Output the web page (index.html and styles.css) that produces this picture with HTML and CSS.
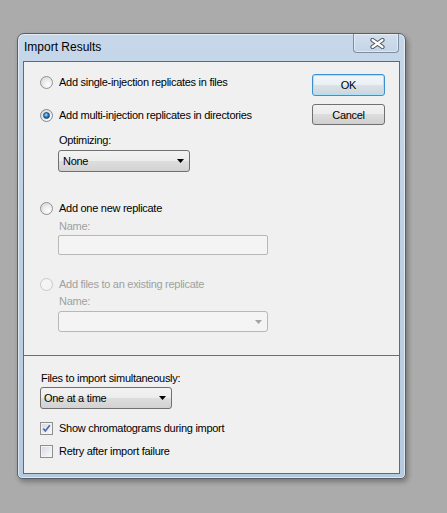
FILE: index.html
```html
<!DOCTYPE html>
<html>
<head>
<meta charset="utf-8">
<link rel="stylesheet" href="styles.css">
</head>
<body>
<div class="window">
  <div class="titlebar">
    <div class="title">Import Results</div>
    <div class="close">
      <svg width="15" height="11" viewBox="0 0 15 11">
        <path d="M2.5 2 L12.5 9 M12.5 2 L2.5 9" stroke="#4d5561" stroke-width="4.2" stroke-linecap="round" fill="none"/>
        <path d="M2.5 2 L12.5 9 M12.5 2 L2.5 9" stroke="#ffffff" stroke-width="2.2" stroke-linecap="round" fill="none"/>
      </svg>
    </div>
  </div>
  <div class="client">
    <div class="top">
      <div class="options">
        <div class="row r1"><span class="radio"></span><span>Add single-injection replicates in files</span></div>
        <div class="row r2"><span class="radio checked"></span><span>Add multi-injection replicates in directories</span></div>
        <div class="label l-opt">Optimizing:</div>
        <div class="combo c-none"><span>None</span><svg class="arrow" width="7" height="4" viewBox="0 0 7 4"><path d="M0 0 H7 L3.5 4 Z" fill="#000"/></svg></div>
        <div class="row r3"><span class="radio"></span><span>Add one new replicate</span></div>
        <div class="label disabled l-name1">Name:</div>
        <div class="textbox"></div>
        <div class="row r4 disabled"><span class="radio off"></span><span>Add files to an existing replicate</span></div>
        <div class="label disabled l-name2">Name:</div>
        <div class="combo off"><span></span><svg class="arrow" width="7" height="4" viewBox="0 0 7 4"><path d="M0 0 H7 L3.5 4 Z" fill="#a3a3a3"/></svg></div>
      </div>
      <div class="buttons">
        <div class="btn default">OK</div>
        <div class="btn cancel">Cancel</div>
      </div>
    </div>
    <div class="bottom">
      <div class="label l-files">Files to import simultaneously:</div>
      <div class="combo c-files"><span>One at a time</span><svg class="arrow" width="7" height="4" viewBox="0 0 7 4"><path d="M0 0 H7 L3.5 4 Z" fill="#000"/></svg></div>
      <div class="row k1"><span class="check">
        <svg width="11" height="11" viewBox="0 0 11 11"><path d="M2.3 5.6 L4.4 8 L8.8 2.3" stroke="#5468a6" stroke-width="1.7" fill="none"/></svg>
      </span><span>Show chromatograms during import</span></div>
      <div class="row k2"><span class="check"></span><span>Retry after import failure</span></div>
    </div>
  </div>
</div>
</body>
</html>
```
FILE: styles.css
```css
html, body {
  margin: 0;
  padding: 0;
}
body {
  background: #ababab;
  width: 447px;
  height: 513px;
  overflow: hidden;
  font-family: "Liberation Sans", Arial, sans-serif;
  font-size: 11px;
  color: #000;
}
.window {
  margin: 33px 0 0 17px;
  width: 389px;
  box-sizing: border-box;
  border: 1px solid #5a5f66;
  border-radius: 7px 7px 5px 5px;
  background: linear-gradient(to bottom, #c6d7ea 0, #bfd1e4 40%, #b6cadf 100%);
  padding: 0 5px 4px;
  box-shadow: 2px 3px 5px rgba(0, 0, 0, 0.3), inset 0 0 0 1px rgba(255, 255, 255, 0.55);
}
.titlebar {
  display: flex;
  justify-content: space-between;
  height: 27px;
}
.title {
  font-family: "Liberation Sans", Arial, sans-serif;
  font-size: 12px;
  line-height: 27px;
  padding-left: 1px;
  color: #000;
}
.close {
  width: 46px;
  height: 19px;
  margin-right: 1px;
  box-sizing: border-box;
  border: 1px solid #7d8da0;
  border-top: none;
  border-radius: 0 0 4px 4px;
  display: flex;
  align-items: center;
  justify-content: center;
  background: linear-gradient(#d2dfec, #c4d5e7);
  box-shadow: inset 0 0 0 1px rgba(255, 255, 255, 0.45);
}
.close svg {
  margin-left: 2px;
}
.client {
  border: 1px solid #5d6a79;
  background: #f0f0f0;
  height: 413px;
  box-sizing: border-box;
  display: flex;
  flex-direction: column;
  letter-spacing: -0.28px;
}
.top {
  height: 293px;
  flex: none;
  display: flex;
  justify-content: space-between;
  border-bottom: 1px solid #6e6e6e;
}
.options {
  padding-left: 16px;
  display: flex;
  flex-direction: column;
  align-items: flex-start;
}
.row {
  display: flex;
  align-items: center;
  gap: 6px;
  height: 14px;
  white-space: nowrap;
}
.label {
  height: 13px;
  line-height: 13px;
  margin-left: 19px;
  white-space: nowrap;
}
.disabled {
  color: #a0a0a0;
}
.r1 { margin-top: 13px; }
.r2 { margin-top: 19px; }
.l-opt { margin-top: 12px; }
.c-none { margin-top: 3px; margin-left: 18px; }
.r3 { margin-top: 29px; }
.l-name1 { margin-top: 5px; }
.textbox {
  margin-top: 2px;
  margin-left: 18px;
  width: 210px;
  height: 20px;
  box-sizing: border-box;
  border: 1px solid #b8b8b8;
  border-radius: 2px;
  background: #f4f4f4;
}
.r4 { margin-top: 22px; }
.l-name2 { margin-top: 4px; }
.combo.off { margin-top: 3px; margin-left: 18px; }

.radio {
  width: 13px;
  height: 13px;
  box-sizing: border-box;
  border-radius: 50%;
  border: 1px solid #929292;
  background: radial-gradient(circle at 65% 70%, #ffffff 0, #ececec 45%, #cfcfcf 100%);
  display: flex;
  align-items: center;
  justify-content: center;
  flex: none;
}
.radio.checked {
  border-color: #7b8a99;
}
.radio.checked::after {
  content: "";
  width: 7px;
  height: 7px;
  box-sizing: border-box;
  border-radius: 50%;
  border: 1px solid #1c3f66;
  background: radial-gradient(circle at 40% 35%, #a6e2ff 0, #2b86d0 45%, #0b3e74 100%);
}
.radio.off {
  border-color: #c8c8c8;
  background: #f4f4f4;
}

.combo {
  width: 132px;
  height: 22px;
  box-sizing: border-box;
  border: 1px solid #707070;
  border-radius: 3px;
  background: linear-gradient(#f3f3f3 0, #ececec 50%, #dedede 50%, #d2d2d2 100%);
  display: flex;
  align-items: center;
  justify-content: space-between;
  padding: 0 5px 0 4px;
  white-space: nowrap;
}
.combo.off {
  width: 210px;
  height: 21px;
  border-color: #b8b8b8;
  background: #f4f4f4;
}
.arrow {
  flex: none;
}

.buttons {
  padding: 12px 14px 0 0;
  display: flex;
  flex-direction: column;
}
.btn {
  width: 73px;
  height: 22px;
  box-sizing: border-box;
  border: 1px solid #707070;
  border-radius: 3px;
  background: linear-gradient(#f2f2f2 0, #ebebeb 50%, #dddddd 50%, #cfcfcf 100%);
  display: flex;
  align-items: center;
  justify-content: center;
}
.btn.default {
  border-color: #3c8fd0;
  box-shadow: inset 0 0 0 1px #a9e3fb;
  background: linear-gradient(#f2f6f9 0, #eaf0f4 50%, #dbe2e8 50%, #cdd5dc 100%);
}
.btn.cancel {
  margin-top: 8px;
  height: 21px;
}

.bottom {
  flex: 1;
  padding-left: 16px;
  display: flex;
  flex-direction: column;
  align-items: flex-start;
}
.l-files {
  margin-top: 16px;
  margin-left: 1px;
}
.c-files {
  margin-top: 2px;
  padding-left: 3px;
}
.k1 { margin-top: 12px; }
.k2 { margin-top: 9px; }
.check {
  width: 13px;
  height: 13px;
  box-sizing: border-box;
  border: 1px solid #8f8f8f;
  background: linear-gradient(135deg, #d4d8de 0, #eceef0 60%, #f8f8f8 100%);
  box-shadow: inset 0 0 0 1px #f4f4f4;
  display: flex;
  align-items: center;
  justify-content: center;
  flex: none;
}
```
